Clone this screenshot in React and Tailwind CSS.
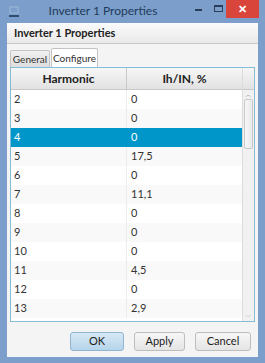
import React from "react";

const rows = [
  ["2", "0"],
  ["3", "0"],
  ["4", "0"],
  ["5", "17,5"],
  ["6", "0"],
  ["7", "11,1"],
  ["8", "0"],
  ["9", "0"],
  ["10", "0"],
  ["11", "4,5"],
  ["12", "0"],
  ["13", "2,9"],
];

function TitleBar() {
  return (
    <div className="h-[23px] flex items-center relative">
      <svg width="12" height="12" viewBox="0 0 12 12" className="ml-[8px]">
        <rect x="2" y="1" width="8" height="6" fill="none" stroke="#9fb9d6" strokeWidth="1" />
        <rect x="1" y="9" width="10" height="2" fill="#2f4c73" />
      </svg>
      <div className="flex-1 text-center text-[12px] text-[#223a5c] pb-[1px]">Inverter 1 Properties</div>
      <div className="flex items-start h-full">
        <div className="w-[24px] h-[17px] flex items-center justify-center">
          <div className="w-[7px] h-[2px] bg-[#2a3d5a] mt-[3px]" />
        </div>
        <div className="w-[16px] h-[17px] flex items-center justify-center">
          <div className="w-[9px] h-[7px] border border-[#2a3d5a] border-t-2" />
        </div>
        <div className="w-[33px] h-[18px] bg-[#d9443b] flex items-center justify-center mr-[6px] text-white text-[11px] font-bold">
          ✕
        </div>
      </div>
    </div>
  );
}

function Row({ h, v, i }) {
  const sel = i === 2;
  const bg = sel ? "bg-[#0096c9] text-white" : i % 2 === 1 ? "bg-[#f9f9f9] text-[#333]" : "bg-white text-[#333]";
  return (
    <div className={"flex h-[19px] items-center text-[11px] " + bg}>
      <div className={"w-[116px] pl-[3px] h-full flex items-center border-r " + (sel ? "border-[#0096c9]" : "border-[#ececec]")}>{h}</div>
      <div className="flex-1 pl-[4px]">{v}</div>
    </div>
  );
}

export default function App() {
  return (
    <div
      className="w-[265px] h-[363px] bg-[#7b9fca] flex flex-col overflow-hidden"
      style={{ fontFamily: 'Lato, "Open Sans", sans-serif' }}
    >
      <TitleBar />
      <div className="mx-[7px] mb-[6px] flex-1 bg-[#f4f4f4] flex flex-col">
        <div className="h-[21px] bg-gradient-to-b from-[#fbfbfb] to-[#e9e9e9] border-b border-[#c8c8c8] flex items-center pl-[7px] text-[11px] font-bold text-[#222]">
          Inverter 1 Properties
        </div>
        <div className="px-[3px] pt-[4px] flex flex-col">
          <div className="flex items-end h-[19px]">
            <div className="h-[17px] w-[40px] mr-[1px] flex items-center justify-center text-[10px] text-[#333] bg-gradient-to-b from-[#f0f0f0] to-[#dedede] border border-b-0 border-[#c4c4c4] rounded-t-[2px]">
              General
            </div>
            <div className="h-[19px] w-[47px] flex items-center justify-center text-[10px] text-[#333] bg-white border border-b-0 border-[#c4c4c4] rounded-t-[2px]">
              Configure
            </div>
          </div>
          <div className="h-[255px] border border-[#86bdd6] bg-white flex overflow-hidden">
            <div className="flex-1 flex flex-col">
              <div className="h-[22px] flex bg-gradient-to-b from-[#f6f6f6] to-[#e2e2e2] border-b border-[#c8c8c8] text-[12px] font-bold text-[#222]">
                <div className="w-[116px] flex items-center justify-center border-r border-[#c8c8c8]">Harmonic</div>
                <div className="flex-1 flex items-center justify-center">Ih/IN, %</div>
              </div>
              {rows.map(([h, v], i) => (
                <Row key={h} h={h} v={v} i={i} />
              ))}
            </div>
            <div className="w-[12px] flex flex-col border-l border-[#dcdcdc] bg-[#f1f1f1]">
              <div className="h-[22px] bg-gradient-to-b from-[#f6f6f6] to-[#e2e2e2] border-b border-[#c8c8c8]" />
              <div className="h-[9px] flex items-center justify-center text-[7px] text-[#999] leading-none">︿</div>
              <div className="mx-[1px] h-[50px] bg-gradient-to-r from-[#f8f8f8] to-[#e9e9e9] border border-[#c9c9c9] rounded-[2px]" />
              <div className="flex-1" />
              <div className="h-[10px] flex items-center justify-center text-[7px] text-[#999] leading-none">﹀</div>
            </div>
          </div>
          <div className="flex justify-end gap-[10px] pr-[4px] mt-[10px]">
            <button className="w-[54px] h-[19px] rounded-[3px] border border-[#8fb6d1] bg-gradient-to-b from-[#d6e8f4] to-[#b6d4ea] text-[11px] text-[#222]">OK</button>
            <button className="w-[51px] h-[19px] rounded-[3px] border border-[#bdbdbd] bg-gradient-to-b from-[#f7f7f7] to-[#e4e4e4] text-[11px] text-[#222]">Apply</button>
            <button className="w-[56px] h-[19px] rounded-[3px] border border-[#bdbdbd] bg-gradient-to-b from-[#f7f7f7] to-[#e4e4e4] text-[11px] text-[#222]">Cancel</button>
          </div>
        </div>
      </div>
    </div>
  );
}
